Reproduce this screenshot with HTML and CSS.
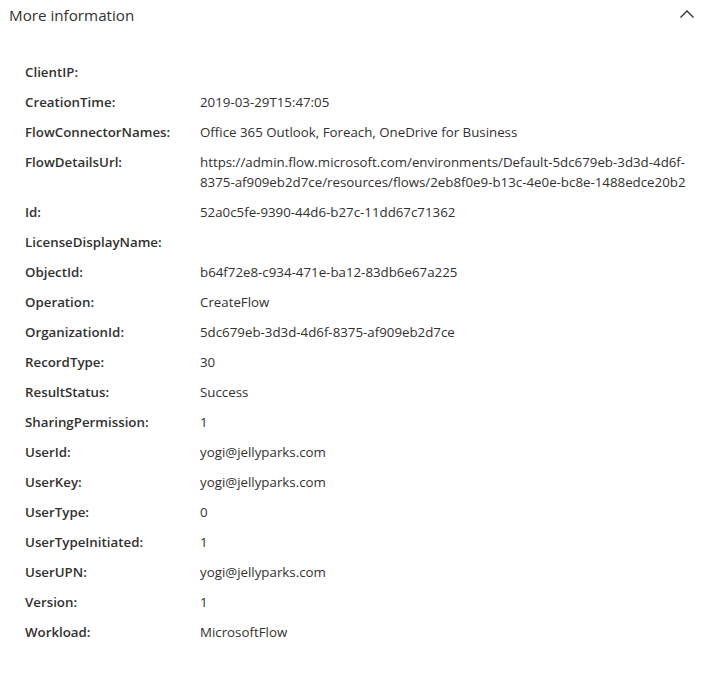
FILE: index.html
```html
<!DOCTYPE html>
<html>
<head>
<meta charset="utf-8">
<link rel="stylesheet" href="styles.css">
</head>
<body>
<div class="panel">
  <div class="header">
    <span class="title">More information</span>
    <svg class="chev" width="16" height="10" viewBox="0 0 16 10"><path d="M1.5 8.5 L8 2 L14.5 8.5" fill="none" stroke="#323130" stroke-width="1.3"/></svg>
  </div>
  <div class="details">
    <div class="k">ClientIP:</div><div class="v"></div>
    <div class="k">CreationTime:</div><div class="v">2019-03-29T15:47:05</div>
    <div class="k">FlowConnectorNames:</div><div class="v">Office 365 Outlook, Foreach, OneDrive for Business</div>
    <div class="k">FlowDetailsUrl:</div><div class="v">https://admin.flow.microsoft.com/environments/Default-5dc679eb-3d3d-4d6f-<br>8375-af909eb2d7ce/resources/flows/2eb8f0e9-b13c-4e0e-bc8e-1488edce20b2</div>
    <div class="k">Id:</div><div class="v">52a0c5fe-9390-44d6-b27c-11dd67c71362</div>
    <div class="k">LicenseDisplayName:</div><div class="v"></div>
    <div class="k">ObjectId:</div><div class="v">b64f72e8-c934-471e-ba12-83db6e67a225</div>
    <div class="k">Operation:</div><div class="v">CreateFlow</div>
    <div class="k">OrganizationId:</div><div class="v">5dc679eb-3d3d-4d6f-8375-af909eb2d7ce</div>
    <div class="k">RecordType:</div><div class="v">30</div>
    <div class="k">ResultStatus:</div><div class="v">Success</div>
    <div class="k">SharingPermission:</div><div class="v">1</div>
    <div class="k">UserId:</div><div class="v">yogi@jellyparks.com</div>
    <div class="k">UserKey:</div><div class="v">yogi@jellyparks.com</div>
    <div class="k">UserType:</div><div class="v">0</div>
    <div class="k">UserTypeInitiated:</div><div class="v">1</div>
    <div class="k">UserUPN:</div><div class="v">yogi@jellyparks.com</div>
    <div class="k">Version:</div><div class="v">1</div>
    <div class="k">Workload:</div><div class="v">MicrosoftFlow</div>
  </div>
</div>
</body>
</html>
```
FILE: styles.css
```css
html, body {
  margin: 0;
  padding: 0;
  background: #ffffff;
}
body {
  font-family: "Open Sans", "Noto Sans", sans-serif;
  color: #323130;
}
.panel {
  width: 726px;
}
.header {
  display: flex;
  align-items: center;
  justify-content: space-between;
  height: 30px;
  padding: 0 31px 0 9px;
}
.title {
  font-size: 15.2px;
  color: #323130;
}
.chev {
  display: block;
  margin-top: -3px;
}
.details {
  display: grid;
  grid-template-columns: 175px 520px;
  row-gap: 10px;
  padding: 32px 0 0 25px;
  font-size: 13.3px;
  line-height: 20px;
}
.k {
  font-weight: 600;
}
.v {
  min-height: 20px;
}
```
